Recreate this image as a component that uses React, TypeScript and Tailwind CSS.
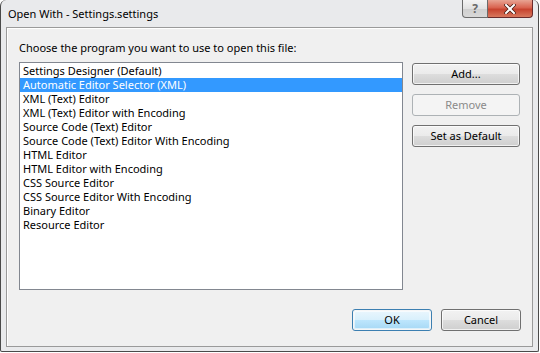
import React from "react";

const items = [
  "Settings Designer (Default)",
  "Automatic Editor Selector (XML)",
  "XML (Text) Editor",
  "XML (Text) Editor with Encoding",
  "Source Code (Text) Editor",
  "Source Code (Text) Editor With Encoding",
  "HTML Editor",
  "HTML Editor with Encoding",
  "CSS Source Editor",
  "CSS Source Editor With Encoding",
  "Binary Editor",
  "Resource Editor",
];

const font = { fontFamily: '"Noto Sans", "Open Sans", sans-serif' };

function Btn({ label, w, disabled, primary }: { label: string; w: string; disabled?: boolean; primary?: boolean }) {
  if (disabled) {
    return (
      <div className={`${w} h-[22px] rounded-[3px] border border-[#adb2b5] bg-[#f4f4f4] flex items-center justify-center text-[11px] text-[#8a8a8a]`}>
        {label}
      </div>
    );
  }
  if (primary) {
    return (
      <div className={`${w} h-[22px] rounded-[3px] border border-[#3c7fb1] p-[1px] bg-white/40`}>
        <div className="w-full h-full rounded-[2px] bg-[linear-gradient(to_bottom,#e9f6fd_0%,#d9f0fc_48%,#bee6fd_50%,#a7d9f5_100%)] flex items-center justify-center text-[11px] text-black shadow-[inset_0_0_0_1px_rgba(255,255,255,0.6)]">
          {label}
        </div>
      </div>
    );
  }
  return (
    <div className={`${w} h-[22px] rounded-[3px] border border-[#707070] bg-[linear-gradient(to_bottom,#f2f2f2_0%,#ebebeb_48%,#dddddd_50%,#cfcfcf_100%)] flex items-center justify-center text-[11px] text-black shadow-[inset_0_0_0_1px_rgba(255,255,255,0.7)]`}>
      {label}
    </div>
  );
}

export default function App() {
  return (
    <div className="w-[540px] h-[353px] bg-white overflow-hidden" style={font}>
      <div className="w-[539px] h-[352px] rounded-t-[6px] rounded-b-[2px] border border-[#4a4a4a] border-t-0 bg-[#e9eaec] flex flex-col">
        {/* Title bar */}
        <div className="h-[27px] flex items-start shrink-0">
          <div className="pl-[7px] pt-[6px] text-[11px] text-black leading-[16px] flex-1">Open With - Settings.settings</div>
          <div className="flex mr-[5px]">
            <div className="w-[26px] h-[18px] rounded-bl-[4px] border border-t-0 border-[#6b6b6b] bg-[linear-gradient(to_bottom,#f4f4f4_0%,#e2e2e2_50%,#cfcfcf_51%,#d8d8d8_100%)] flex items-center justify-center text-[12px] font-bold text-[#6a6a6a] leading-none">
              ?
            </div>
            <div className="w-[45px] h-[18px] rounded-br-[4px] border border-t-0 border-l-0 border-[#6b2b2b] bg-[linear-gradient(to_bottom,#e8a493_0%,#d9634f_45%,#c7432f_55%,#d8785e_100%)] flex items-center justify-center">
              <svg width="12" height="10" viewBox="0 0 12 10">
                <path d="M2 1 L10 9 M10 1 L2 9" stroke="#4a1a10" strokeWidth="3.6" strokeLinecap="square" />
                <path d="M2 1 L10 9 M10 1 L2 9" stroke="#ffffff" strokeWidth="2" strokeLinecap="square" />
              </svg>
            </div>
          </div>
        </div>
        {/* Client */}
        <div className="mx-[5px] mb-[4px] flex-1 border border-[#9a9a9a] bg-[#f0f0f0] shadow-[inset_1px_1px_0_#ffffff] flex flex-col pl-[12px] pr-[11px]">
          <div className="pt-[12px] h-[34px] text-[11px] leading-[15px] text-black">Choose the program you want to use to open this file:</div>
          <div className="flex gap-[9px]">
            <div className="w-[384px] h-[228px] border border-[#828790] bg-white pt-[1px]">
              {items.map((it, i) => (
                <div
                  key={it}
                  className={`h-[14px] pl-[3px] text-[11px] leading-[14px] whitespace-nowrap ${i === 1 ? "bg-[#3399ff] text-white" : "text-black"}`}
                >
                  {it}
                </div>
              ))}
            </div>
            <div className="flex flex-col gap-[9px] pt-[1px]">
              <Btn label="Add..." w="w-[108px]" />
              <Btn label="Remove" w="w-[108px]" disabled />
              <Btn label="Set as Default" w="w-[108px]" />
            </div>
          </div>
          <div className="flex justify-end gap-[9px] mt-[19px]">
            <Btn label="OK" w="w-[80px]" primary />
            <Btn label="Cancel" w="w-[80px]" />
          </div>
        </div>
      </div>
    </div>
  );
}
